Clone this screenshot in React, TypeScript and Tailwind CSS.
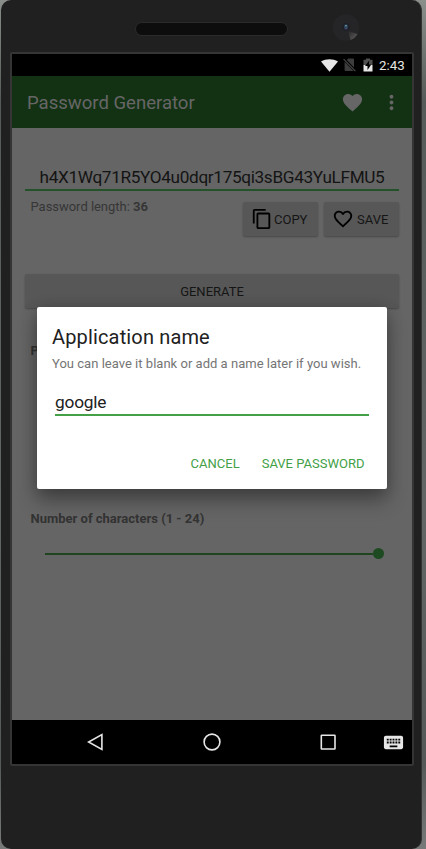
import React from "react";

type IconProps = { d: string; className: string };

function Icon({ d, className }: IconProps) {
  return (
    <svg viewBox="0 0 24 24" fill="currentColor" className={className}>
      <path d={d} />
    </svg>
  );
}

const HEART =
  "M12 21.35l-1.45-1.32C5.4 15.36 2 12.28 2 8.5 2 5.42 4.42 3 7.5 3c1.74 0 3.41.81 4.5 2.09C13.09 3.81 14.76 3 16.5 3 19.58 3 22 5.42 22 8.5c0 3.78-3.4 6.86-8.55 11.54L12 21.35z";
const HEART_OUTLINE =
  "M16.5 3c-1.74 0-3.41.81-4.5 2.09C10.91 3.81 9.24 3 7.5 3 4.42 3 2 5.42 2 8.5c0 3.78 3.4 6.86 8.55 11.54L12 21.35l1.45-1.32C18.6 15.36 22 12.28 22 8.5 22 5.42 19.58 3 16.5 3zm-4.4 15.55l-.1.1-.1-.1C7.14 14.24 4 11.39 4 8.5 4 6.5 5.5 5 7.5 5c1.54 0 3.04.99 3.57 2.36h1.87C13.46 5.99 14.96 5 16.5 5c2 0 3.5 1.5 3.5 3.5 0 2.89-3.14 5.74-7.9 10.05z";
const COPY =
  "M16 1H4c-1.1 0-2 .9-2 2v14h2V3h12V1zm3 4H8c-1.1 0-2 .9-2 2v14c0 1.1.9 2 2 2h11c1.1 0 2-.9 2-2V7c0-1.1-.9-2-2-2zm0 16H8V7h11v14z";
const MORE =
  "M12 8c1.1 0 2-.9 2-2s-.9-2-2-2-2 .9-2 2 .9 2 2 2zm0 2c-1.1 0-2 .9-2 2s.9 2 2 2 2-.9 2-2-.9-2-2-2zm0 6c-1.1 0-2 .9-2 2s.9 2 2 2 2-.9 2-2-.9-2-2-2z";
const KEYBOARD =
  "M20 5H4c-1.1 0-1.99.9-1.99 2L2 17c0 1.1.9 2 2 2h16c1.1 0 2-.9 2-2V7c0-1.1-.9-2-2-2zm-9 3h2v2h-2V8zm0 3h2v2h-2v-2zM8 8h2v2H8V8zm0 3h2v2H8v-2zm-1 2H5v-2h2v2zm0-3H5V8h2v2zm9 7H8v-2h8v2zm0-4h-2v-2h2v2zm0-3h-2V8h2v2zm3 3h-2v-2h2v2zm0-3h-2V8h2v2z";

function PhoneTop() {
  return (
    <div className="flex h-[52px] shrink-0 pl-[134px]">
      <div className="mt-[22px] h-[14px] w-[153px] rounded-full border border-[#2b2b2b] bg-[#0d0d0d]" />
      <svg viewBox="0 0 28 28" className="ml-[44px] mt-[13px] h-7 w-7">
        <defs>
          <linearGradient id="glint" x1="0" y1="0" x2="1" y2="1">
            <stop offset="0" stopColor="#252528" />
            <stop offset="1" stopColor="#65615f" />
          </linearGradient>
        </defs>
        <circle cx="14" cy="14.5" r="13.3" fill="#252528" />
        <path d="M16 18l9.5 3a13 13 0 0 1-7 6z" fill="url(#glint)" />
        <circle cx="14" cy="14" r="4" fill="#1f2027" />
        <ellipse cx="14" cy="14" rx="1.9" ry="2.8" fill="#2b4659" />
        <ellipse cx="14" cy="12.7" rx="1.1" ry="0.8" fill="#6b93a3" />
        <circle cx="14.3" cy="15.2" r="0.9" fill="#4e4272" />
      </svg>
    </div>
  );
}

function StatusBar() {
  return (
    <div className="flex h-[22px] shrink-0 items-center bg-black pl-[309px] text-[#e6e6e6]">
      <svg viewBox="0 0 17 13" className="h-[13px] w-[17px]">
        <path d="M8.5 12.8L0 2.6C5-.6 12-.6 17 2.6z" fill="currentColor" />
      </svg>
      <svg viewBox="0 0 13 14" className="ml-[5px] h-[14px] w-[13px]">
        <path d="M3.8 2L5.2 .6H10a1 1 0 0 1 1 1v8zM1.6 3.8L10.6 13H2.6a1 1 0 0 1-1-1z" fill="#3c3c3c" />
        <path d="M.6 1.2L12.4 13.2" stroke="#4a4a4a" strokeWidth="1.1" />
      </svg>
      <svg viewBox="0 0 10 14" className="ml-[7px] h-[14px] w-[10px]">
        <path d="M.5 1.8H3V.6h4v1.2h2.5V7h-9z" fill="#505050" />
        <path d="M.5 7h9v6.5h-9z" fill="currentColor" />
        <path d="M6.2 2.6L2 8.1h2.5v4L8.3 6.5H5.9z" fill="#000" />
      </svg>
      <span className="ml-[6px] pt-px text-[13.3px] leading-[22px]">2:43</span>
    </div>
  );
}

function AppBar() {
  return (
    <div className="flex h-[52px] shrink-0 items-center bg-[#133214] pl-[15px] text-[#666]">
      <h1 className="w-[305px] pt-[2px] text-[18.6px] leading-6 tracking-[-0.03px]">Password Generator</h1>
      <Icon d={HEART} className="ml-[9px] h-[23px] w-[23px]" />
      <Icon d={MORE} className="ml-[16px] h-[23px] w-[23px]" />
    </div>
  );
}

const raised = "bg-[#575757] rounded-[2px] shadow-[0_1px_2px_rgba(0,0,0,0.3)] flex items-center text-[13px] text-[#151515]";

function Content() {
  return (
    <div className="h-[592px] shrink-0 bg-[#656565] pl-[13px] pr-[13px] pt-[38px]">
      <div className="h-[25px] border-b-2 border-[#23512a] text-center text-[17.2px] leading-[22px] tracking-[-0.34px] text-[#141414]">
        h4X1Wq71R5YO4u0dqr175qi3sBG43YuLFMU5
      </div>
      <div className="flex h-[83px]">
        <p className="w-[218px] pl-[5.5px] pt-[6px] text-[13px] leading-5 tracking-[-0.03px] text-[#363636]">
          Password length: <b>36</b>
        </p>
        <button className={raised + " mt-[11px] h-[34px] w-[75px] pl-2"}>
          <Icon d={COPY} className="h-[22px] w-[22px] text-black" />
          <span className="ml-px pt-px">COPY</span>
        </button>
        <button className={raised + " ml-[6px] mt-[11px] h-[34px] w-[75px] pl-2"}>
          <Icon d={HEART_OUTLINE} className="h-[22px] w-[22px] text-black" />
          <span className="ml-[3px] pt-px">SAVE</span>
        </button>
      </div>
      <button className={raised + " h-[34px] w-full justify-center pt-[2px]"}>GENERATE</button>
      <p className="mt-[33px] pl-[5.5px] text-[13px] font-bold leading-5 text-[#333]">P</p>
      <p className="mt-[148px] pl-[5.5px] text-[13px] font-bold leading-5 text-[#333]">
        Number of characters (1 - 24)
      </p>
      <div className="ml-5 mt-[19px] flex h-[11px] w-[339px] items-center">
        <div className="h-[2px] grow bg-[#1e4420]" />
        <div className="h-[11px] w-[11px] rounded-full bg-[#1d4a20]" />
      </div>
    </div>
  );
}

function Dialog() {
  return (
    <div className="absolute left-[25px] top-[253px] h-[182px] w-[350px] rounded-[2px] bg-white pl-[15px] pr-[18px] pt-[16px] shadow-[0_12px_20px_rgba(0,0,0,0.3),0_2px_16px_rgba(0,0,0,0.2)]">
      <h2 className="text-[20px] leading-7 tracking-[0.15px] text-[#212121]">Application name</h2>
      <p className="mt-[3px] whitespace-nowrap text-[13px] leading-5 tracking-[0.02px] text-[#757575]">
        You can leave it blank or add a name later if you wish.
      </p>
      <div className="ml-[3px] mt-[16px] h-[26px] border-b-2 border-[#43a047] text-[17.3px] leading-[24px] tracking-[-0.2px] text-[#212121]">
        google
      </div>
      <div className="mt-[38px] flex justify-end gap-[22px] pr-[4.5px] text-[13px] leading-5 text-[#43a047]">
        <button>CANCEL</button>
        <button>SAVE PASSWORD</button>
      </div>
    </div>
  );
}

function NavBar() {
  return (
    <div className="flex h-[44px] shrink-0 items-center bg-black pl-[75px] text-[#e6e6e6]">
      <svg viewBox="0 0 18 18" className="h-[18px] w-[18px]" fill="none" stroke="currentColor" strokeWidth="1.6">
        <path d="M14.9 1.6v14.8L1.6 9z" />
      </svg>
      <svg viewBox="0 0 18 18" className="ml-[98px] h-[18px] w-[18px]" fill="none" stroke="currentColor" strokeWidth="1.6">
        <circle cx="9" cy="9" r="7.9" />
      </svg>
      <svg viewBox="0 0 16 16" className="ml-[99px] h-4 w-4" fill="none" stroke="currentColor" strokeWidth="1.6">
        <rect x="1.3" y="1.3" width="13.7" height="13.7" rx="0.4" />
      </svg>
      <Icon d={KEYBOARD} className="ml-[46px] h-[23px] w-[23px]" />
    </div>
  );
}

export default function App() {
  return (
    <div className="h-[849px] w-[426px] overflow-hidden bg-[linear-gradient(#8b8f8b,#555b58_12%,#626765_60%,#555958_90%,#777a79)] pl-px font-['Roboto',sans-serif]">
      <div className="flex h-[849px] w-[421px] flex-col rounded-[10px] border-r border-[#333] bg-[#202020]">
        <PhoneTop />
        <div className="ml-[9px] flex h-[714px] w-[404px] flex-col rounded-[2px] border-2 border-[#353535]">
          <div className="relative flex flex-col">
            <StatusBar />
            <AppBar />
            <Content />
            <NavBar />
            <Dialog />
          </div>
        </div>
      </div>
    </div>
  );
}
